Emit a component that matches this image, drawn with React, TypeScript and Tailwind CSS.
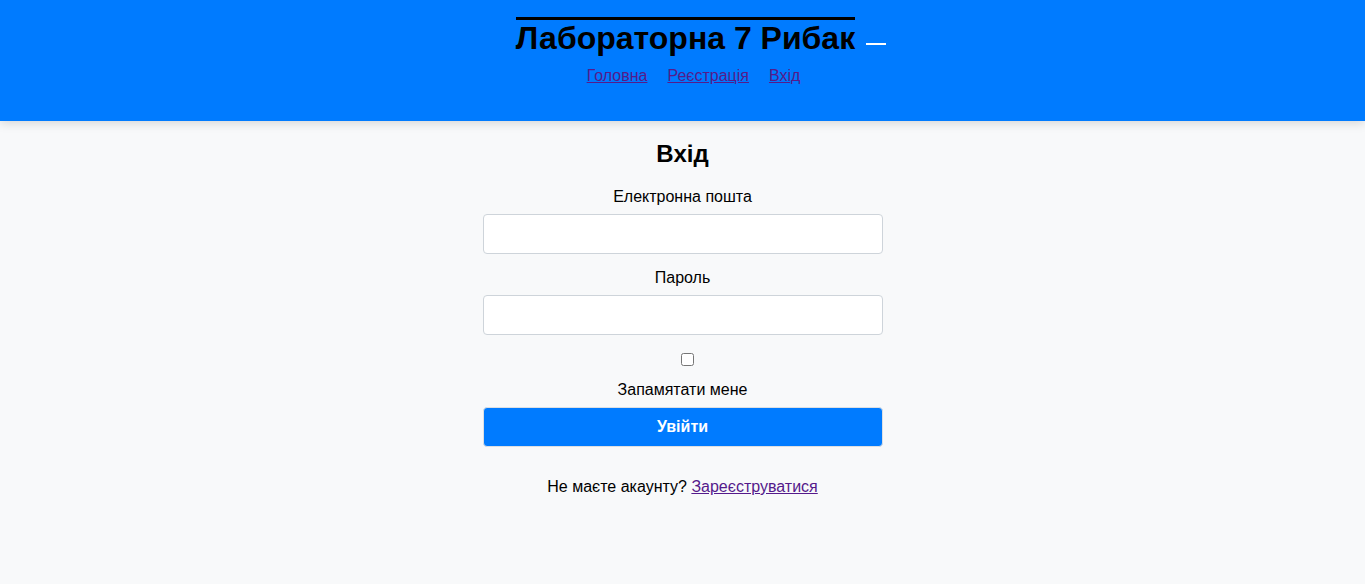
export default function App() {
  return (
    <div className="min-h-screen bg-[#f8f9fa] font-['Liberation_Sans',Arial,sans-serif] text-black">
      <header className="relative z-10 flex h-[121px] flex-col items-center bg-[#007bff] pt-[17px] shadow-[0_2px_10px_rgba(0,0,0,0.15)]">
        <h1 className="relative ml-[6px] border-t-[3px] border-black text-[32px] font-bold leading-[37px]">
          Лабораторна 7 Рибак
          <span className="absolute left-[calc(100%+11px)] top-[23px] h-[2px] w-[20px] bg-white" />
        </h1>
        <nav className="mt-[10px] flex gap-[20px] pl-[22px] text-[16px] leading-[18px]">
          <a href="#" className="text-[#551a8b] underline">Головна</a>
          <a href="#" className="text-[#551a8b] underline">Реєстрація</a>
          <a href="#" className="text-[#551a8b] underline">Вхід</a>
        </nav>
      </header>

      <main className="flex flex-col items-center">
        <h2 className="mt-[19px] text-[24px] font-bold leading-[28px]">Вхід</h2>
        <form className="flex w-[400px] flex-col items-center text-[16px] leading-[18px]">
          <label htmlFor="email" className="mt-[20px]">Електронна пошта</label>
          <input
            id="email"
            type="email"
            className="mt-[8px] h-[40px] w-full rounded-[4px] border border-[#ced4da] bg-white px-3"
          />
          <label htmlFor="password" className="mt-[15px]">Пароль</label>
          <input
            id="password"
            type="password"
            className="mt-[8px] h-[40px] w-full rounded-[4px] border border-[#ced4da] bg-white px-3"
          />
          <input id="remember" type="checkbox" className="m-0 ml-[9px] mt-[18px] h-[13px] w-[13px]" />
          <label htmlFor="remember" className="mt-[15px]">Запамятати мене</label>
          <button
            type="button"
            className="mt-[8px] h-[40px] w-full rounded-[4px] border border-[#dcdfe3] bg-[#007bff] font-bold text-white"
          >
            Увійти
          </button>
        </form>
        <p className="mt-[31px] text-[16px] leading-[18px]">
          Не маєте акаунту?{' '}
          <a href="#" className="text-[#551a8b] underline">Зареєструватися</a>
        </p>
      </main>
    </div>
  );
}
